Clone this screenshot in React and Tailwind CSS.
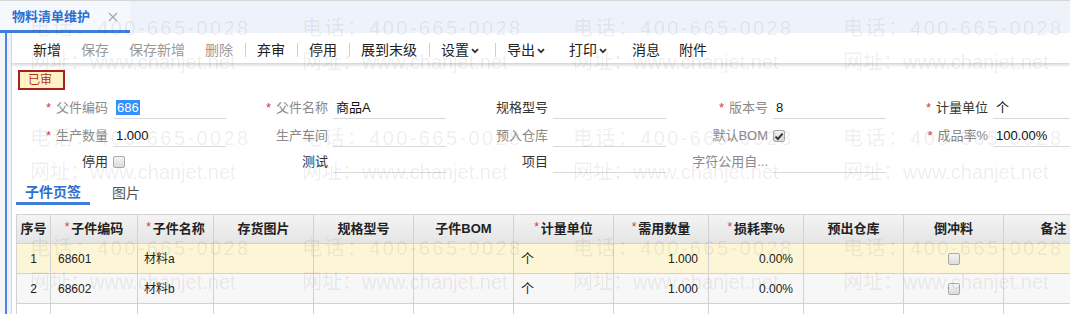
import React from 'react';

const font = { fontFamily: '"Liberation Sans", "Noto Sans CJK SC", sans-serif' };

const toolbar = [
  { t: '新增', cls: 'ml-[21px] text-[#222]' },
  { t: '保存', cls: 'ml-[20px] text-[#999]' },
  { t: '保存新增', cls: 'ml-[20px] text-[#999]' },
  { t: '删除', cls: 'ml-[20px] text-[#999]' },
  { sep: true, cls: 'ml-[12px]' },
  { t: '弃审', cls: 'ml-[11px] text-[#222]' },
  { sep: true, cls: 'ml-[12px]' },
  { t: '停用', cls: 'ml-[11px] text-[#222]' },
  { sep: true, cls: 'ml-[12px]' },
  { t: '展到末级', cls: 'ml-[11px] text-[#222]' },
  { sep: true, cls: 'ml-[12px]' },
  { t: '设置', cls: 'ml-[11px] text-[#222]', chev: true },
  { sep: true, cls: 'ml-[16px]' },
  { t: '导出', cls: 'ml-[11px] text-[#222]', chev: true },
  { t: '打印', cls: 'ml-[24px] text-[#222]', chev: true },
  { t: '消息', cls: 'ml-[25px] text-[#222]' },
  { t: '附件', cls: 'ml-[19px] text-[#222]' },
];

const Chevron = () => (
  <svg width="8" height="6" viewBox="0 0 8 6" className="ml-[2px] mt-[1px]">
    <path d="M1 1.2 L4 4.2 L7 1.2" fill="none" stroke="#333" strokeWidth="1.8" />
  </svg>
);

const Check = ({ checked, className = '' }) => (
  <span
    className={`inline-flex items-center justify-center w-[12px] h-[12px] rounded-[2px] border border-[#a9a9a9] bg-gradient-to-b from-[#f4f4f4] to-[#dcdcdc] ${className}`}
  >
    {checked && (
      <svg width="10" height="9" viewBox="0 0 10 9">
        <path d="M1.5 4.6 L3.9 7 L8.6 1.6" fill="none" stroke="#333" strokeWidth="2" />
      </svg>
    )}
  </span>
);

// one form cell: label column + input column, 220px wide in total
const Field = ({ label, req, dark, value, sel, line = true, check, checked }) => (
  <div className="w-[220px] shrink-0 flex items-end">
    <div className={`w-[101px] shrink-0 pr-[5px] text-right h-[22px] leading-[22px] text-[13px] whitespace-nowrap ${dark ? 'text-[#333]' : 'text-[#8a8a8a]'}`}>
      {req && <span className="text-[#d2384a] mr-[5px]">*</span>}
      {label}
    </div>
    {check ? (
      <div className="h-[22px] flex items-center">
        <Check checked={checked} />
      </div>
    ) : (
      <div className={`w-[113px] shrink-0 h-[22px] leading-[22px] pl-[3px] text-[13px] text-[#111] whitespace-nowrap ${line ? 'border-b border-[#d9d9d9]' : ''}`}>
        {sel ? <span className="bg-[#3390ff] text-white px-[1px]">{value}</span> : value}
      </div>
    )}
  </div>
);

const cols = [
  { t: '序号' },
  { t: '子件编码', req: true },
  { t: '子件名称', req: true },
  { t: '存货图片' },
  { t: '规格型号' },
  { t: '子件BOM' },
  { t: '计量单位', req: true },
  { t: '需用数量', req: true },
  { t: '损耗率%', req: true },
  { t: '预出仓库' },
  { t: '倒冲料' },
  { t: '备注' },
];

const rows = [
  { n: '1', code: '68601', name: '材料a', bg: 'bg-[#fdf6d6]' },
  { n: '2', code: '68602', name: '材料b', bg: 'bg-[#f7f7f7]' },
  { n: '', code: '', name: '', bg: 'bg-white', empty: true },
];

const grid = 'grid grid-cols-[34px_87px_76px_100px_100px_100px_100px_95px_95px_100px_100px_100px]';
const cell = 'border-r border-b border-[#d2d2d2] h-[30px] flex items-center text-[12px] text-[#222]';

const wmX = ['left-[30px]', 'left-[302px]', 'left-[573px]', 'left-[843px]'];
const wmY = [
  ['top-[15px]', 'top-[49px]'],
  ['top-[125px]', 'top-[159px]'],
  ['top-[235px]', 'top-[269px]'],
];

export default function App() {
  return (
    <div className="relative w-[1070px] h-[314px] overflow-hidden bg-white" style={font}>
      {/* tab strip */}
      <div className="h-[33px] bg-[#eef3fb] border-t border-[#d6d6d6] flex items-end">
        <div className="w-[130px] h-[32px] bg-[#f5f8fd] border-b-[3px] border-[#3f7fd8] flex items-center pl-[12px] pt-[3px]">
          <span className="text-[13px] font-bold text-[#2e6fd0]">物料清单维护</span>
          <svg width="10" height="10" viewBox="0 0 10 10" className="ml-[18px]">
            <path d="M1 1 L9 9 M9 1 L1 9" stroke="#a8a8a8" strokeWidth="1.3" />
          </svg>
        </div>
      </div>

      <div className="flex h-[281px]">
        <div className="w-[5px] shrink-0 bg-[#f4f6f9]" />
        <div className="w-[2px] shrink-0 bg-[#4a86e0]" />
        <div className="w-[5px] shrink-0 bg-[#eff2f7] border-r border-[#cfd6e0]" />

        <div className="flex-1 flex flex-col overflow-hidden">
          {/* toolbar */}
          <div className="shrink-0 h-[30px] pt-[4px] bg-white flex items-center text-[14px] shadow-[0_2px_3px_rgba(0,0,0,0.18)] relative">
            {toolbar.map((b, i) =>
              b.sep ? (
                <span key={i} className={`w-px h-[14px] bg-[#d0d0d0] ${b.cls}`} />
              ) : (
                <span key={i} className={`flex items-center leading-none ${b.cls}`}>
                  {b.t}
                  {b.chev && <Chevron />}
                </span>
              )
            )}
          </div>

          {/* status */}
          <div className="shrink-0 mt-[7px] ml-[6px] w-[47px] h-[20px] border-2 border-[#a82020] bg-[#fff3c4] text-[#b0302a] text-[12px] leading-[16px] pl-[8px]">
            已审
          </div>

          {/* form */}
          <div className="shrink-0 flex h-[29px] items-end">
            <Field req label="父件编码" value="686" sel />
            <Field req label="父件名称" value="商品A" />
            <Field dark label="规格型号" value="" />
            <Field req label="版本号" value="8" />
            <Field req dark label="计量单位" value="个" />
          </div>
          <div className="shrink-0 flex h-[28px] items-end">
            <Field req label="生产数量" value="1.000" />
            <Field label="生产车间" value="" />
            <Field label="预入仓库" value="" />
            <Field label="默认BOM" check checked />
            <Field req label="成品率%" value="100.00%" />
          </div>
          <div className="shrink-0 flex h-[26px] items-end">
            <Field dark label="停用" check />
            <Field dark label="测试" value="" />
            <Field dark label="项目" value="" />
            <Field label="字符公用自..." value="" />
          </div>

          {/* sub tabs */}
          <div className="shrink-0 flex h-[32px] ml-[4px]">
            <div className="w-[74px] border-b-[3px] border-[#3f7fd8] pt-[9px] flex items-center justify-center text-[14px] font-bold text-[#2e6fd0]">
              子件页签
            </div>
            <div className="w-[72px] pt-[9px] flex items-center justify-center text-[14px] text-[#555]">
              图片
            </div>
          </div>

          {/* table */}
          <div className="shrink-0 mt-[9px] ml-[4px] w-[1087px]">
            <div className={`${grid} border-t border-l border-[#d2d2d2] bg-gradient-to-b from-[#f4f4f4] to-[#e4e4e4]`}>
              {cols.map((c, i) => (
                <div key={i} className="border-r border-b border-[#d2d2d2] h-[29px] flex items-center justify-center text-[13px] font-bold text-[#222]">
                  {c.req && <span className="text-[#d2384a] font-normal mr-[2px] -mt-[4px] text-[12px]">*</span>}
                  {c.t}
                </div>
              ))}
            </div>
            {rows.map((r, i) => (
              <div key={i} className={`${grid} border-l border-[#d2d2d2] ${r.bg}`}>
                <div className={`${cell} justify-center`}>{r.n}</div>
                <div className={`${cell} pl-[7px]`}>{r.code}</div>
                <div className={`${cell} pl-[6px]`}>{r.name}</div>
                <div className={cell} />
                <div className={cell} />
                <div className={cell} />
                <div className={`${cell} pl-[7px] text-[13px]`}>{r.empty ? '' : '个'}</div>
                <div className={`${cell} justify-end pr-[10px]`}>{r.empty ? '' : '1.000'}</div>
                <div className={`${cell} justify-end pr-[10px]`}>{r.empty ? '' : '0.00%'}</div>
                <div className={cell} />
                <div className={`${cell} justify-center`}>{!r.empty && <Check />}</div>
                <div className={cell} />
              </div>
            ))}
          </div>
        </div>
      </div>

      {/* watermark */}
      {wmY.map((ys, ri) =>
        wmX.map((x) => (
          <React.Fragment key={`${ri}-${x}`}>
            <span className={`absolute ${x} ${ys[0]} pointer-events-none whitespace-nowrap text-[20px] leading-[26px] tracking-[2.4px] text-black/[0.08]`}>
              电话：400-665-0028
            </span>
            <span className={`absolute ${x} ${ys[1]} pointer-events-none whitespace-nowrap text-[20px] leading-[26px] text-black/[0.08]`}>
              网址：www.chanjet.net
            </span>
          </React.Fragment>
        ))
      )}
    </div>
  );
}
